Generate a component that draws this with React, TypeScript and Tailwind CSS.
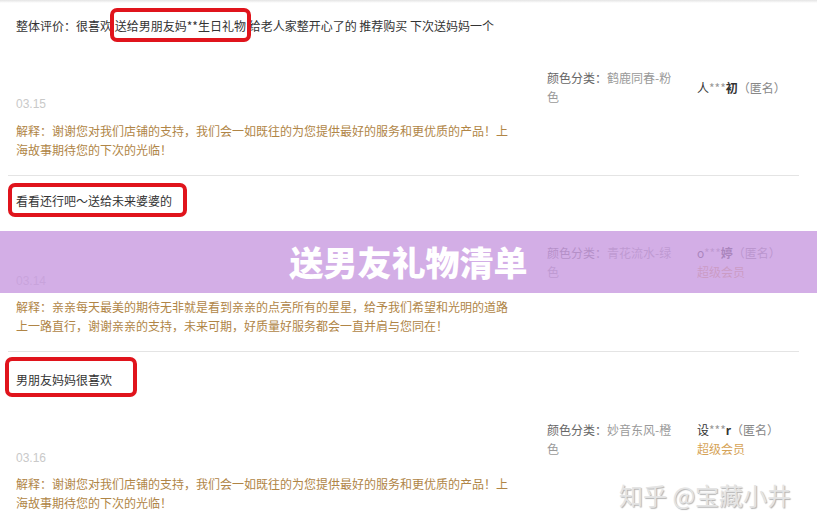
const reviews = [
  {
    color: "鹤鹿同春-粉",
    user: ["人", "初"],
    vip: false,
    date: "03.15",
    reply: [
      "解释：谢谢您对我们店铺的支持，我们会一如既往的为您提供最好的服务和更优质的产品！上",
      "海故事期待您的下次的光临！",
    ],
  },
  {
    color: "青花流水-绿",
    user: ["o", "婷"],
    vip: true,
    date: "03.14",
    reply: [
      "解释：亲亲每天最美的期待无非就是看到亲亲的点亮所有的星星，给予我们希望和光明的道路",
      "上一路直行，谢谢亲亲的支持，未来可期，好质量好服务都会一直并肩与您同在！",
    ],
  },
  {
    color: "妙音东风-橙",
    user: ["设", "r"],
    vip: true,
    date: "03.16",
    reply: [
      "解释：谢谢您对我们店铺的支持，我们会一如既往的为您提供最好的服务和更优质的产品！上",
      "海故事期待您的下次的光临！",
    ],
  },
];

function Meta({ item, gap, tight }: { item: (typeof reviews)[number]; gap: string; tight?: boolean }) {
  return (
    <div className={`flex items-start ${gap}`}>
      {/* date + shop reply */}
      <div className={`w-[547px] shrink-0 pl-4 ${tight ? "pt-[29px]" : "pt-[27px]"}`}>
        <div className="text-[#c9c9c9] font-['Liberation_Sans',sans-serif] font-light">{item.date}</div>
        <div className={`${tight ? "mt-[6px]" : "mt-[7px]"} text-[#b08546]`}>
          {item.reply[0]}
          <br />
          {item.reply[1]}
        </div>
      </div>

      {/* sku + buyer */}
      <div className="flex items-center">
        <div className="w-[150px] shrink-0 text-[#9a9a9a]">
          <span className="text-[#666]">颜色分类：</span>
          {item.color}
          <br />色
        </div>
        <div>
          <div className="text-[#333]">
            {item.user[0]}
            <span className="text-[#999]">***</span>
            <span className="font-semibold">{item.user[1]}</span>
            <span className="text-[#888]">（匿名）</span>
          </div>
          {item.vip && <div className="text-[#d6a356]">超级会员</div>}
        </div>
      </div>
    </div>
  );
}

function Divider() {
  return <div className="ml-2 mt-4 h-px w-[791px] bg-[#e4e4e4]" />;
}

export default function App() {
  return (
    <div className="relative h-[527px] w-[817px] overflow-hidden bg-white text-[12px] leading-[19px] text-[#333] font-['Noto_Sans_CJK_SC','Noto_Sans',sans-serif]">
      <div className="h-[3px] bg-gradient-to-b from-[#e4e4e4] to-white" />

      {/* review 1 */}
      <div className="mt-[13px] pl-4">
        整体评价：很喜欢{" "}
        <span className="relative">
          送给男朋友妈**生日礼物
          <span className="absolute -left-[5px] -right-[5px] -top-[9px] -bottom-[8px] rounded-[7px] border-4 border-[#e0141c]" />
        </span>{" "}
        给老人家整开心了的 推荐购买 下次送妈妈一个
      </div>
      <Meta item={reviews[0]} gap="mt-[33px]" />
      <Divider />

      {/* review 2 */}
      <div className="mt-[15px] pl-4">
        <span className="relative">
          看看还行吧～送给未来婆婆的
          <span className="absolute -left-[8px] -right-[15px] -top-[9px] -bottom-[8px] rounded-[7px] border-4 border-[#e0141c]" />
        </span>
      </div>
      <Meta item={reviews[1]} gap="mt-[33px]" tight />
      <Divider />

      {/* review 3 */}
      <div className="mt-[18px] pl-4">
        <span className="relative">
          男朋友妈妈很喜欢
          <span className="absolute -left-[11px] -right-[25px] -top-[14px] -bottom-[9px] rounded-[7px] border-4 border-[#e0141c]" />
        </span>
      </div>
      <Meta item={reviews[2]} gap="mt-[31px]" tight />

      {/* title banner over the list */}
      <div className="absolute left-0 right-0 top-[231px] flex h-[62px] items-center justify-center bg-[rgba(200,154,224,0.8)]">
        <span className="text-[34px] font-black leading-none text-white">送男友礼物清单</span>
      </div>

      {/* watermark */}
      <div className="absolute left-[619px] top-[480px] text-[24px] leading-[30px] text-[#e4e4e4] [text-shadow:1px_1px_1px_rgba(0,0,0,0.3)]">
        知乎 @宝藏小井
      </div>
    </div>
  );
}
